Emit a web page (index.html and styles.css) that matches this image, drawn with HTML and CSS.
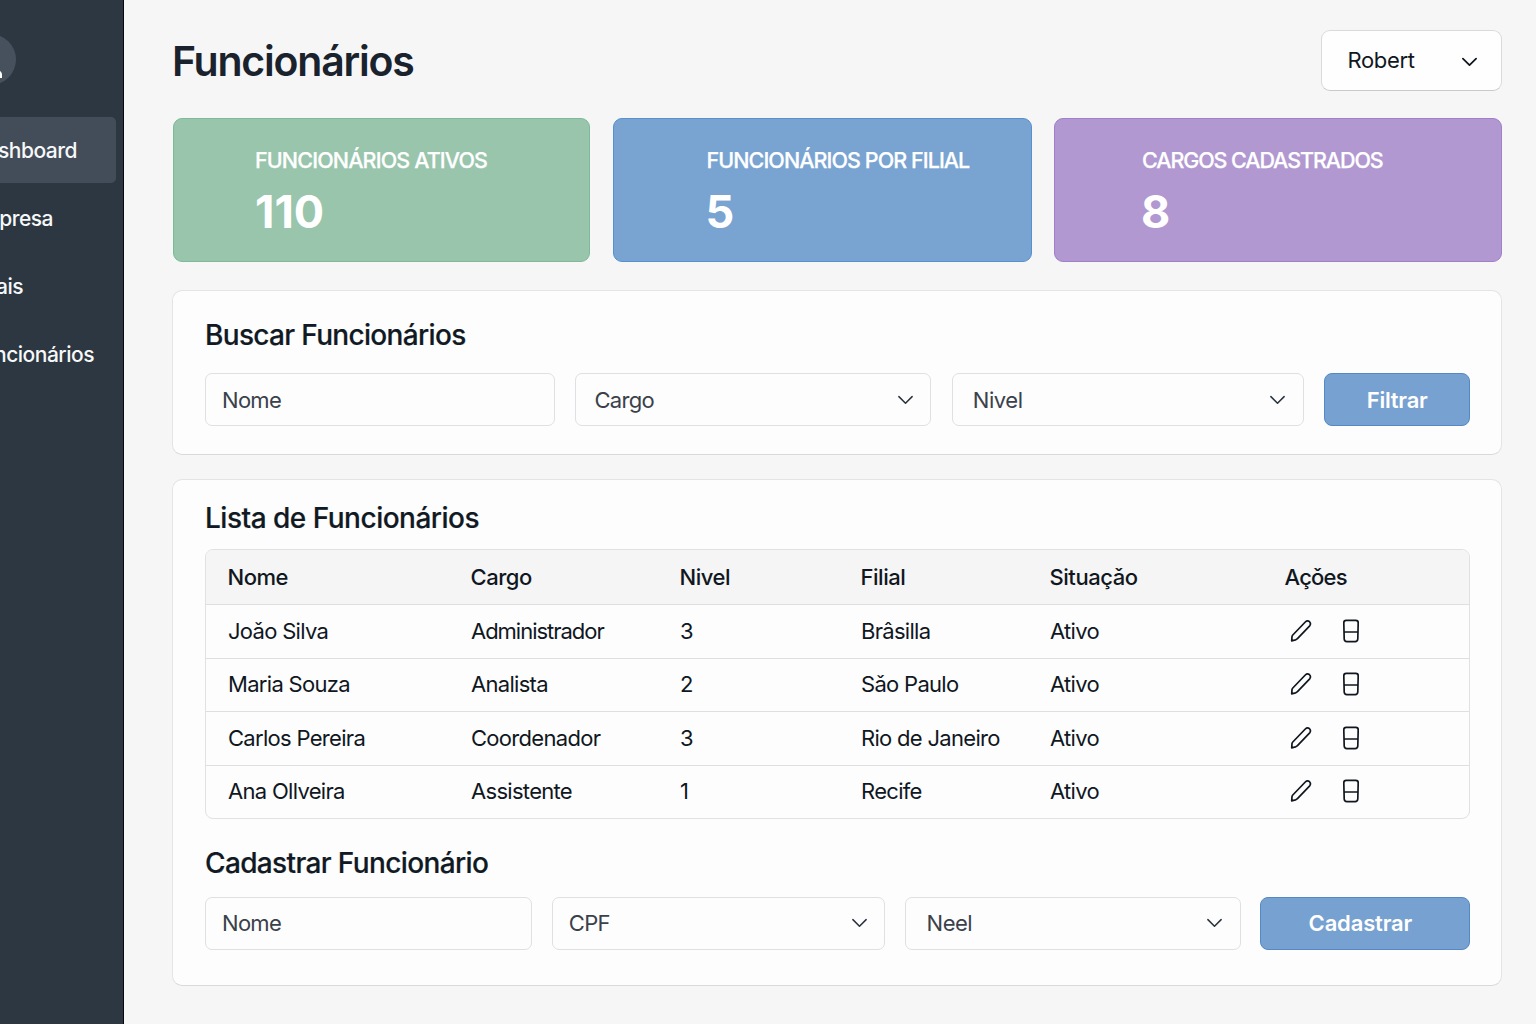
FILE: index.html
```html
<!DOCTYPE html>
<html lang="pt-BR">
<head>
<meta charset="utf-8">
<title>Funcionários</title>
<link rel="stylesheet" href="styles.css">
</head>
<body>
<svg class="defs" aria-hidden="true">
  <symbol id="chevron" viewBox="0 0 18 12"><path d="M2 2.4 9 9.4 16 2.4"/></symbol>
  <symbol id="pencil" viewBox="0 0 22 24"><path d="M1.7 21.8 2 17.6Q2.1 16.7 2.8 16L15.3 3Q17.4 1 19.5 2.7 21.3 4.7 19.7 6.8L7.2 19.8Q6.5 20.6 5.5 20.9Z"/></symbol>
  <symbol id="drawer" viewBox="0 0 18 24"><path d="M4.2 1.4H13.8Q16.2 1.4 16.2 3.8L15.8 20Q15.6 22.6 13.2 22.6H4.8Q2.4 22.6 2.2 20L1.8 3.8Q1.8 1.4 4.2 1.4ZM2 13H16"/></symbol>
</svg>
<div class="app">
  <aside class="sidebar">
    <svg class="avatar" viewBox="0 0 51 51"><circle cx="25.5" cy="25.5" r="25.5"/><path d="M14 44V41C14 37 17 35.5 25.5 35.5S37 37 37 41V44Z"/></svg>
    <nav class="nav">
      <a class="nav-item nav-dashboard active">Dashboard</a>
      <a class="nav-item nav-empresa">Empresa</a>
      <a class="nav-item nav-filiais">Filiais</a>
      <a class="nav-item nav-funcionarios">Funcionários</a>
    </nav>
  </aside>
  <main class="main">
    <header class="topbar">
      <h1>Funcionários</h1>
      <button class="user"><span>Robert</span><svg class="chevron"><use href="#chevron"/></svg></button>
    </header>
    <section class="stats">
      <div class="stat green"><span class="label">FUNCIONÁRIOS ATIVOS</span><strong>110</strong></div>
      <div class="stat blue"><span class="label">FUNCIONÁRIOS POR FILIAL</span><strong>5</strong></div>
      <div class="stat purple"><span class="label">CARGOS CADASTRADOS</span><strong>8</strong></div>
    </section>
    <section class="panel search">
      <h2>Buscar Funcionários</h2>
      <div class="fields search-fields">
        <div class="field"><span>Nome</span></div>
        <div class="field cargo"><span>Cargo</span><svg class="chevron"><use href="#chevron"/></svg></div>
        <div class="field nivel"><span>Nivel</span><svg class="chevron"><use href="#chevron"/></svg></div>
        <button class="btn">Filtrar</button>
      </div>
    </section>
    <section class="panel list">
      <h2 class="list-title">Lista de Funcionários</h2>
      <div class="table">
        <div class="row head"><span>Nome</span><span>Cargo</span><span>Nivel</span><span>Filial</span><span>Situaçǎo</span><span class="acoes">Açǒes</span></div>
        <div class="row"><span>Joǎo Silva</span><span class="tight">Administrador</span><span>3</span><span>Brâsilla</span><span>Ativo</span><span class="actions"><svg class="pencil"><use href="#pencil"/></svg><svg class="drawer"><use href="#drawer"/></svg></span></div>
        <div class="row"><span>Maria Souza</span><span>Analista</span><span>2</span><span>Sǎo Paulo</span><span>Ativo</span><span class="actions"><svg class="pencil"><use href="#pencil"/></svg><svg class="drawer"><use href="#drawer"/></svg></span></div>
        <div class="row"><span>Carlos Pereira</span><span>Coordenador</span><span>3</span><span>Rio de Janeiro</span><span>Ativo</span><span class="actions"><svg class="pencil"><use href="#pencil"/></svg><svg class="drawer"><use href="#drawer"/></svg></span></div>
        <div class="row"><span>Ana Ollveira</span><span>Assistente</span><span>1</span><span>Recife</span><span>Ativo</span><span class="actions"><svg class="pencil"><use href="#pencil"/></svg><svg class="drawer"><use href="#drawer"/></svg></span></div>
      </div>
      <h2 class="register-title">Cadastrar Funcionário</h2>
      <div class="fields register-fields">
        <div class="field"><span>Nome</span></div>
        <div class="field cpf"><span>CPF</span><svg class="chevron"><use href="#chevron"/></svg></div>
        <div class="field neel"><span>Neel</span><svg class="chevron"><use href="#chevron"/></svg></div>
        <button class="btn register">Cadastrar</button>
      </div>
    </section>
  </main>
</div>
</body>
</html>
```
FILE: styles.css
```css
* { box-sizing: border-box; }

body {
  margin: 0;
  font-family: Inter, "Liberation Sans", sans-serif;
  font-size: 22px;
  color: #10171f;
  background: #f6f6f6;
}

button { font: inherit; color: inherit; }
h1, h2 { margin: 0; }
svg { display: block; flex: none; }
.defs { display: none; }

.app {
  display: grid;
  grid-template-columns: 124px 1fr;
  height: 1024px;
  overflow: hidden;
}

/* Sidebar */
.sidebar {
  overflow: hidden;
  padding-top: 34px;
  background: #2c3741;
  border-right: 1px solid #05090d;
}
.avatar { width: 51px; height: 51px; margin-left: -35px; }
.avatar circle { fill: #46515d; }
.avatar path { fill: #fff; }

.nav {
  display: flex;
  flex-direction: column;
  gap: 2px;
  width: 180px;
  margin: 32px 0 0 -64px;
}
.nav-item {
  display: flex;
  align-items: center;
  justify-content: flex-end;
  height: 66px;
  padding-top: 1px;
  border-radius: 5px;
  font-size: 21px;
  font-weight: 500;
  letter-spacing: -0.5px;
  color: #f7f8f9;
}
.nav-item.active { background: #434d59; }
.nav-dashboard { padding-right: 39px; }
.nav-empresa { padding-right: 63px; }
.nav-filiais { padding-right: 93px; }
.nav-funcionarios { padding-right: 22px; }

/* Page header */
.main { padding: 30px 34px 0 48px; }

.topbar {
  display: flex;
  align-items: center;
  justify-content: space-between;
  height: 61px;
}
h1 {
  font-size: 41px;
  font-weight: 600;
  line-height: 60px;
  letter-spacing: -1.2px;
  color: #1a232d;
}
.user {
  display: flex;
  align-items: center;
  justify-content: space-between;
  width: 181px;
  height: 61px;
  padding: 0 23px 1px 25px;
  border: 1px solid #d9dadb;
  border-bottom-color: #c9cacb;
  border-radius: 9px;
  background: #fefefe;
  letter-spacing: -0.3px;
}

.chevron {
  width: 17px;
  height: 12px;
  fill: none;
  stroke: #2a333d;
  stroke-width: 1.6;
  stroke-linecap: round;
  stroke-linejoin: round;
}
.user .chevron { margin-top: 4px; stroke: #0d141b; stroke-width: 1.8; }

/* Stat cards */
.stats {
  display: grid;
  grid-template-columns: 417px 419px 448px;
  column-gap: 22.5px;
  margin: 27px 0 0 1px;
}
.stat {
  height: 144px;
  padding-top: 27px;
  border: 1px solid;
  border-radius: 9px;
  color: #fff;
}
.label {
  display: block;
  font-size: 21.5px;
  font-weight: 500;
  -webkit-text-stroke: 0.25px #fff;
  line-height: 28px;
  letter-spacing: -0.86px;
  white-space: nowrap;
}
.stat strong {
  display: block;
  margin-top: 10px;
  margin-left: -1px;
  font-size: 45px;
  font-weight: 700;
  line-height: 56px;
}
.green { padding-left: 81px; background: #98c5ac; border-color: #7dbb98; }
.green strong { margin-left: 0; }
.blue { padding-left: 93px; background: #79a3d1; border-color: #5690cf; }
.blue .label { letter-spacing: -0.93px; }
.purple { padding-left: 87px; background: #b198d0; border-color: #a27fcb; }
.purple .label { letter-spacing: -1.08px; }

/* Panels */
.panel {
  padding: 0 31px 0 32px;
  border: 1px solid #e3e4e5;
  border-bottom-color: #d8d9da;
  border-radius: 10px;
  background: #fdfdfd;
}
.search { height: 165px; margin-top: 28px; padding-top: 24px; }
.list { height: 507px; margin-top: 24px; padding-top: 18px; }

h2 {
  font-size: 28px;
  font-weight: 500;
  -webkit-text-stroke: 0.2px #111a24;
  line-height: 40px;
  letter-spacing: -0.67px;
  color: #111a24;
}
.list-title { letter-spacing: -0.5px; }
.register-title { margin-top: 24px; letter-spacing: -0.63px; }

.fields { display: grid; }
.search-fields {
  grid-template-columns: 350px 356px 352px 146px;
  column-gap: 20.4px;
  margin-top: 18px;
}
.register-fields {
  grid-template-columns: 327px 333px 336px 210px;
  column-gap: 19.8px;
  margin-top: 14px;
}
.field {
  display: flex;
  align-items: center;
  justify-content: space-between;
  height: 53px;
  padding: 0 16px;
  border: 1px solid #dfe0e1;
  border-radius: 7px;
  background: #fdfdfd;
  color: #3a414a;
  letter-spacing: -0.7px;
}
.cargo { padding-left: 18px; }
.nivel { padding: 0 17px 0 20px; letter-spacing: -0.42px; }
.neel { padding: 0 17px 0 21px; letter-spacing: -0.5px; }

.btn {
  height: 53px;
  padding: 0;
  border: 1px solid #5389c5;
  border-radius: 8px;
  background: #77a1d0;
  color: #fff;
  font-weight: 600;
  letter-spacing: -0.25px;
}
.register { padding-right: 10px; letter-spacing: -0.15px; }

/* Employee table */
.table {
  margin-top: 11px;
  overflow: hidden;
  border: 1px solid #e0e1e2;
  border-radius: 8px;
}
.row {
  display: grid;
  grid-template-columns: 243px 209px 181px 189px 235px 1fr;
  align-items: center;
  height: 53.4px;
  padding: 0 0 1px 22px;
  border-top: 1px solid #dedfe0;
  letter-spacing: -0.7px;
}
.row.head {
  height: 54.4px;
  padding: 0 0 0 21.5px;
  border-top: 0;
  background: #f5f5f5;
  font-weight: 500;
  letter-spacing: -0.45px;
}
.head .acoes { letter-spacing: -0.8px; }
.row .tight { letter-spacing: -1.02px; }
.actions { display: flex; align-items: center; gap: 30px; padding-left: 5px; }
.pencil, .drawer {
  height: 24px;
  fill: none;
  stroke: #10171f;
  stroke-width: 1.7;
  stroke-linejoin: round;
}
.pencil { width: 22px; }
.drawer { width: 18px; }
```
